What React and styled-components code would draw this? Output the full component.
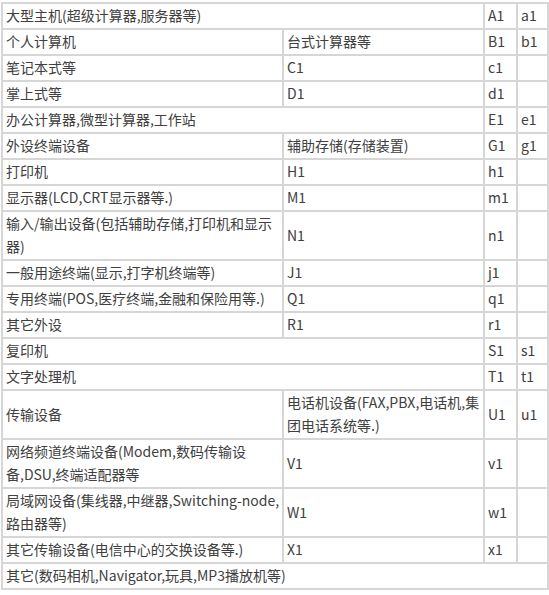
import React from 'react';
import styled, { createGlobalStyle } from 'styled-components';

const GlobalStyle = createGlobalStyle`
	html, body {
		margin: 0;
		padding: 0;
		background: #fff;
	}
	body {
		font-family: "Noto Sans CJK SC", "Microsoft YaHei", sans-serif;
	}
`;

const Wrapper = styled.div`
	padding: 2px 0 0 1px;
`;

const Table = styled.table`
	width: 546px;
	table-layout: fixed;
	border-collapse: collapse;
	border: 2px solid #d6d6d6;
	font-size: 14px;
	color: #404040;
`;

const Col = styled.col`
	width: ${(p) => p.$w}px;
`;

const Cell = styled.td`
	border: 2px solid #d6d6d6;
	padding: 0 3px 1px 3px;
	line-height: 23px;
	vertical-align: middle;
	white-space: nowrap;
	overflow: hidden;
`;

// multi-line cells are given as arrays, one entry per line
const ROWS = [
	[{ t: '大型主机(超级计算器,服务器等)', span: 2 }, 'A1', 'a1'],
	['个人计算机', '台式计算器等', 'B1', 'b1'],
	['笔记本式等', 'C1', 'c1', ''],
	['掌上式等', 'D1', 'd1', ''],
	[{ t: '办公计算器,微型计算器,工作站', span: 2 }, 'E1', 'e1'],
	['外设终端设备', '辅助存储(存储装置)', 'G1', 'g1'],
	['打印机', 'H1', 'h1', ''],
	['显示器(LCD,CRT显示器等.)', 'M1', 'm1', ''],
	[['输入/输出设备(包括辅助存储,打印机和显示', '器)'], 'N1', 'n1', ''],
	['一般用途终端(显示,打字机终端等)', 'J1', 'j1', ''],
	['专用终端(POS,医疗终端,金融和保险用等.)', 'Q1', 'q1', ''],
	['其它外设', 'R1', 'r1', ''],
	[{ t: '复印机', span: 2 }, 'S1', 's1'],
	[{ t: '文字处理机', span: 2 }, 'T1', 't1'],
	['传输设备', ['电话机设备(FAX,PBX,电话机,集', '团电话系统等.)'], 'U1', 'u1'],
	[['网络频道终端设备(Modem,数码传输设', '备,DSU,终端适配器等'], 'V1', 'v1', ''],
	[['局域网设备(集线器,中继器,Switching-node,', '路由器等)'], 'W1', 'w1', ''],
	['其它传输设备(电信中心的交换设备等.)', 'X1', 'x1', ''],
	[{ t: '其它(数码相机,Navigator,玩具,MP3播放机等)', span: 4 }],
];

function renderText(t) {
	if (!Array.isArray(t)) return t;
	return t.map((line, k) => (
		<React.Fragment key={k}>
			{k > 0 && <br />}
			{line}
		</React.Fragment>
	));
}

function App() {
	return (
		<Wrapper>
			<GlobalStyle />
			<Table>
				<colgroup>
					<Col $w={281} />
					<Col $w={201} />
					<Col $w={33} />
					<Col $w={31} />
				</colgroup>
				<tbody>
					{ROWS.map((row, i) => (
						<tr key={i}>
							{row.map((cell, j) =>
								cell && cell.span ? (
									<Cell key={j} colSpan={cell.span}>
										{cell.t}
									</Cell>
								) : (
									<Cell key={j}>{renderText(cell)}</Cell>
								)
							)}
						</tr>
					))}
				</tbody>
			</Table>
		</Wrapper>
	);
}

export default App;
